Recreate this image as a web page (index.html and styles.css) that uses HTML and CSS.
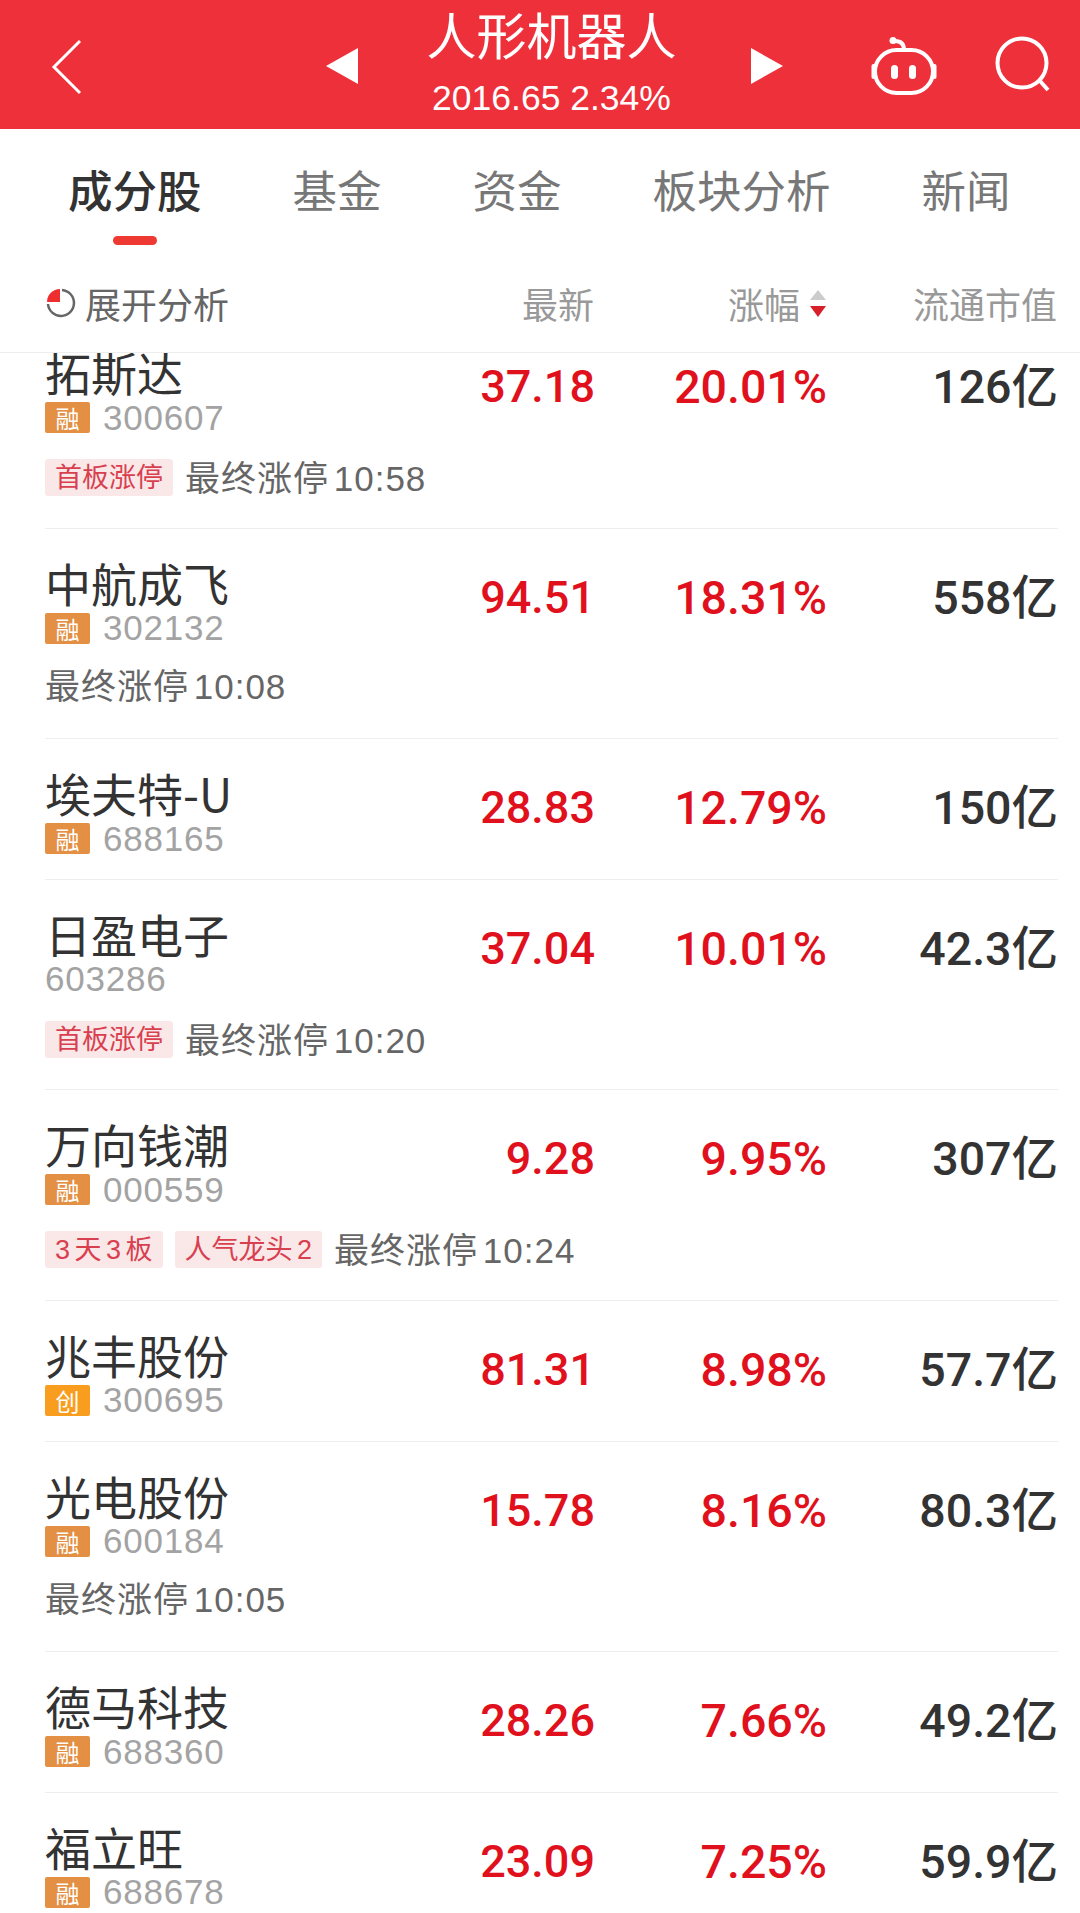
FILE: index.html
```html
<!DOCTYPE html>
<html lang="zh-CN">
<head>
    <meta charset="UTF-8">
    <meta name="viewport" content="width=device-width, initial-scale=1.0">
    <title>人形机器人</title>
    <link rel="stylesheet" href="styles.css">
</head>
<body>

<div class="topbar">
    <svg class="back-icon" width="32" height="56" viewBox="0 0 32 56"><path d="M29 2 L3 28 L29 54"/></svg>
    <div class="topbar-center">
        <span class="arrow-left"></span>
        <div class="topbar-title">
            <div class="title">人形机器人</div>
            <div class="subtitle">2016.65 2.34%</div>
        </div>
        <span class="arrow-right"></span>
    </div>
    <svg class="robot-icon" width="66" height="60" viewBox="0 0 66 60">
        <path class="line" d="M33 14 C33 7 29 5 24 5"/>
        <circle class="dot" cx="22" cy="4.5" r="3.5"/>
        <rect class="line" x="4" y="14" width="58" height="43" rx="21.5"/>
        <rect class="dot" x="0.5" y="28" width="4" height="15" rx="2"/>
        <rect class="dot" x="61.5" y="28" width="4" height="15" rx="2"/>
        <rect class="dot" x="20" y="29" width="7" height="14" rx="3.5"/>
        <rect class="dot" x="38" y="29" width="7" height="14" rx="3.5"/>
    </svg>
    <svg class="search-icon" width="58" height="58" viewBox="0 0 58 58">
        <circle cx="27" cy="27" r="24.5"/>
        <path d="M45 45 L53 54"/>
    </svg>
</div>

<div class="tabs">
    <div class="tab active">成分股</div>
    <div class="tab">基金</div>
    <div class="tab">资金</div>
    <div class="tab">板块分析</div>
    <div class="tab">新闻</div>
</div>

<div class="table-head">
    <div class="expand">
        <svg width="30" height="30" viewBox="0 0 30 30">
            <path class="ring" d="M16 2 A13 13 0 1 1 2 16"/>
            <path class="slice" d="M14 1 L14 14 L1 14 A13 13 0 0 1 14 1 Z"/>
        </svg>
        展开分析
    </div>
    <div class="col-price">最新</div>
    <div class="col-pct">涨幅<span class="sort"><i class="sort-up"></i><i class="sort-down"></i></span></div>
    <div class="col-value">流通市值</div>
</div>

<div class="list">
    <div class="rows">
        <div class="row">
            <div class="row-main">
                <div>
                    <div class="name">拓斯达</div>
                    <div class="code-line"><span class="badge">融</span>300607</div>
                </div>
                <div class="price">37.18</div>
                <div class="pct">20.01%</div>
                <div class="value">126亿</div>
            </div>
            <div class="tags"><span class="tag">首板涨停</span><span class="limit">最终涨停 10:58</span></div>
        </div>
        <div class="row">
            <div class="row-main">
                <div>
                    <div class="name">中航成飞</div>
                    <div class="code-line"><span class="badge">融</span>302132</div>
                </div>
                <div class="price">94.51</div>
                <div class="pct">18.31%</div>
                <div class="value">558亿</div>
            </div>
            <div class="tags tags-plain"><span class="limit">最终涨停 10:08</span></div>
        </div>
        <div class="row">
            <div class="row-main">
                <div>
                    <div class="name">埃夫特-U</div>
                    <div class="code-line"><span class="badge">融</span>688165</div>
                </div>
                <div class="price">28.83</div>
                <div class="pct">12.79%</div>
                <div class="value">150亿</div>
            </div>
        </div>
        <div class="row">
            <div class="row-main">
                <div>
                    <div class="name">日盈电子</div>
                    <div class="code-line">603286</div>
                </div>
                <div class="price">37.04</div>
                <div class="pct">10.01%</div>
                <div class="value">42.3亿</div>
            </div>
            <div class="tags"><span class="tag">首板涨停</span><span class="limit">最终涨停 10:20</span></div>
        </div>
        <div class="row">
            <div class="row-main">
                <div>
                    <div class="name">万向钱潮</div>
                    <div class="code-line"><span class="badge">融</span>000559</div>
                </div>
                <div class="price">9.28</div>
                <div class="pct">9.95%</div>
                <div class="value">307亿</div>
            </div>
            <div class="tags"><span class="tag">3 天 3 板</span><span class="tag">人气龙头 2</span><span class="limit">最终涨停 10:24</span></div>
        </div>
        <div class="row">
            <div class="row-main">
                <div>
                    <div class="name">兆丰股份</div>
                    <div class="code-line"><span class="badge badge-chuang">创</span>300695</div>
                </div>
                <div class="price">81.31</div>
                <div class="pct">8.98%</div>
                <div class="value">57.7亿</div>
            </div>
        </div>
        <div class="row">
            <div class="row-main">
                <div>
                    <div class="name">光电股份</div>
                    <div class="code-line"><span class="badge">融</span>600184</div>
                </div>
                <div class="price">15.78</div>
                <div class="pct">8.16%</div>
                <div class="value">80.3亿</div>
            </div>
            <div class="tags tags-plain"><span class="limit">最终涨停 10:05</span></div>
        </div>
        <div class="row">
            <div class="row-main">
                <div>
                    <div class="name">德马科技</div>
                    <div class="code-line"><span class="badge">融</span>688360</div>
                </div>
                <div class="price">28.26</div>
                <div class="pct">7.66%</div>
                <div class="value">49.2亿</div>
            </div>
        </div>
        <div class="row">
            <div class="row-main">
                <div>
                    <div class="name">福立旺</div>
                    <div class="code-line"><span class="badge">融</span>688678</div>
                </div>
                <div class="price">23.09</div>
                <div class="pct">7.25%</div>
                <div class="value">59.9亿</div>
            </div>
        </div>
    </div>
</div>

</body>
</html>
```

FILE: styles.css
```css
* {
    box-sizing: border-box;
}
html, body {
    height: 100%;
}
body {
    margin: 0;
    overflow: hidden;
    display: flex;
    flex-direction: column;
    background-color: #fff;
    font-family: "Liberation Sans", "Noto Sans CJK SC", sans-serif;
}

/* top red bar */
.topbar {
    height: 129px;
    flex: none;
    display: flex;
    align-items: center;
    padding-left: 51px;
    background-color: #ee303b;
    color: #fff;
}
.back-icon {
    flex: none;
    margin-top: 4px;
}
.back-icon path {
    fill: none;
    stroke: #fff;
    stroke-width: 3;
}
.topbar-center {
    width: 457px;
    margin-left: 243px;
    display: flex;
    align-items: center;
    justify-content: space-between;
}
.arrow-left, .arrow-right {
    width: 0;
    height: 0;
    margin-top: 2px;
    border-top: 18px solid transparent;
    border-bottom: 18px solid transparent;
}
.arrow-left {
    border-right: 32px solid #fff;
}
.arrow-right {
    border-left: 32px solid #fff;
}
.topbar-title {
    margin-left: -6px;
    text-align: center;
}
.title {
    font-size: 50px;
    line-height: 66px;
    margin-top: -3px;
}
.subtitle {
    font-size: 35.5px;
    line-height: 48px;
    margin-top: 3px;
}
.robot-icon {
    flex: none;
    margin-left: 88px;
    margin-top: 3px;
}
.robot-icon .line {
    fill: none;
    stroke: #fff;
    stroke-width: 4;
}
.robot-icon .dot {
    fill: #fff;
}
.search-icon {
    flex: none;
    margin-left: 58px;
    margin-top: 1px;
}
.search-icon circle, .search-icon path {
    fill: none;
    stroke: #fff;
    stroke-width: 4;
}

/* tabs */
.tabs {
    height: 125px;
    flex: none;
    display: flex;
    gap: 91px;
    padding: 28px 0 0 68px;
    font-family: "Noto Sans CJK SC", sans-serif;
}
.tab {
    position: relative;
    height: 64px;
    font-size: 44.5px;
    line-height: 64px;
    color: #777;
}
.tab.active {
    color: #333;
    font-weight: 500;
}
.tab.active::after {
    content: "";
    position: absolute;
    left: 45px;
    top: 79px;
    width: 44px;
    height: 9px;
    border-radius: 5px;
    background-color: #ef3a33;
}

/* table header */
.table-head {
    height: 99px;
    flex: none;
    display: grid;
    grid-template-columns: 1fr 180px 232px 231px;
    align-items: center;
    padding: 0 23px 0 46px;
    font-family: "Noto Sans CJK SC", sans-serif;
    font-size: 36px;
    color: #999;
    border-bottom: 1px solid #eee;
}
.expand {
    display: flex;
    align-items: center;
    gap: 9px;
    color: #666;
}
.expand .ring {
    fill: none;
    stroke: #666;
    stroke-width: 2.5;
}
.expand .slice {
    fill: #ee2e2e;
}
.col-price, .col-value {
    text-align: right;
}
.col-pct {
    display: flex;
    justify-content: flex-end;
    align-items: center;
    gap: 10px;
}
.sort {
    display: flex;
    flex-direction: column;
    gap: 6px;
}
.sort i {
    display: block;
    width: 0;
    height: 0;
    border-left: 8px solid transparent;
    border-right: 8px solid transparent;
}
.sort-up {
    border-bottom: 10px solid #ccc;
}
.sort-down {
    border-top: 11px solid #d8202a;
}

/* stock rows */
.list {
    flex: 1;
    overflow: hidden;
    min-height: 0;
}
.rows {
    margin-top: -35px;
    padding: 0 22px 0 45px;
}
.row {
    padding: 30px 0 24.6px;
    border-bottom: 1px solid #eeeeee;
}
.row-main {
    display: grid;
    grid-template-columns: 1fr 180px 232px 231px;
}
.name {
    font-family: "Noto Sans CJK SC", sans-serif;
    font-size: 46px;
    line-height: 46px;
    color: #333;
    white-space: nowrap;
}
.code-line {
    display: flex;
    align-items: center;
    height: 31px;
    margin-top: 8px;
    font-size: 35px;
    color: #a3a3a3;
    letter-spacing: 0.8px;
}
.badge {
    width: 45px;
    height: 31px;
    margin-right: 13px;
    border-radius: 2px;
    background-color: #e38f44;
    color: #fff;
    font-family: "Noto Sans CJK SC", sans-serif;
    font-size: 24px;
    line-height: 31px;
    text-align: center;
    letter-spacing: 0;
}
.badge-chuang {
    background-color: #f89d1e;
}
.price, .pct, .value {
    font-family: Roboto, "Noto Sans CJK SC", sans-serif;
    font-weight: 500;
    font-size: 45px;
    line-height: 54px;
    margin-top: 12px;
    text-align: right;
}
.pct, .value {
    font-size: 46.5px;
}
.price, .pct {
    color: #e0111d;
}
.value {
    color: #333;
}
.tags {
    display: flex;
    align-items: center;
    gap: 12px;
    height: 37px;
    margin: 26px 0 7px;
}
.tags-plain {
    margin: 23px 0 10px;
}
.tag {
    height: 37px;
    padding: 0 10px;
    border-radius: 3px;
    background-color: #fae8e9;
    color: #d8404f;
    font-size: 27px;
    line-height: 39px;
    word-spacing: -3px;
}
.limit {
    margin-bottom: 4px;
    font-size: 35px;
    color: #666;
    letter-spacing: 1px;
    word-spacing: -6px;
}
```
